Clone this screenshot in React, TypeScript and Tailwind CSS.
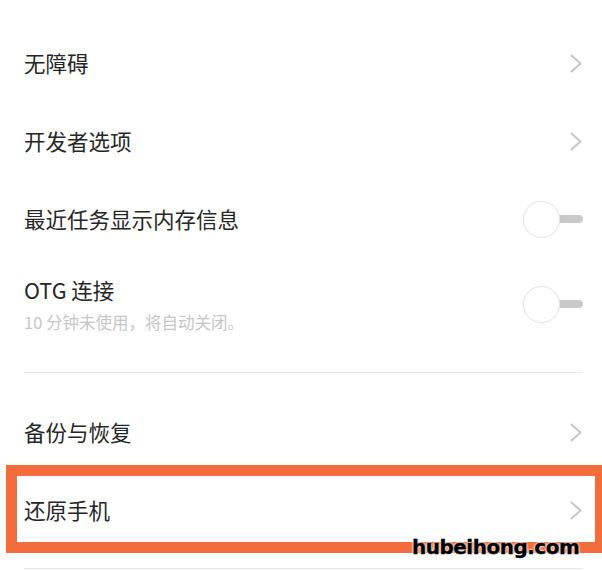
import React from "react";

const FONT = "font-['Noto_Sans_CJK_SC','Noto_Sans',sans-serif]";

function Chevron() {
  return (
    <svg width="14" height="21" viewBox="0 0 14 21" fill="none" aria-hidden>
      <path d="M2.5 2.5L11.5 10.5L2.5 18.5" stroke="#c6c6c6" strokeWidth="2" strokeLinecap="round" strokeLinejoin="round" />
    </svg>
  );
}

function Toggle() {
  return (
    <div className="relative w-[60px] h-[38px] flex items-center">
      <div className="absolute right-0 top-1/2 -translate-y-1/2 w-[42px] h-[8px] rounded-full bg-[#c9c9c9]" />
      <div className="relative w-[37px] h-[37px] rounded-full bg-white border border-[#e4e4e4] shadow-[0_0_2px_rgba(0,0,0,0.06)]" />
    </div>
  );
}

function Row({ title, right, h = "h-[78px]" }: { title: string; right: React.ReactNode; h?: string }) {
  return (
    <div className={`flex items-center justify-between pl-6 pr-[19px] ${h}`}>
      <span className="text-[21.5px] leading-[26px] text-[#262626]">{title}</span>
      {right}
    </div>
  );
}

export default function App() {
  return (
    <div className={`relative w-[602px] h-[570px] overflow-hidden bg-white ${FONT}`}>
      <div className="flex flex-col pt-[24px]">
        <Row title="无障碍" right={<Chevron />} />
        <Row title="开发者选项" right={<Chevron />} />
        <Row title="最近任务显示内存信息" right={<Toggle />} />

        <div className="flex items-center justify-between pl-6 pr-[19px] h-[92px]">
          <div className="flex flex-col gap-[10px]">
            <span className="text-[21.5px] leading-[26px] text-[#262626]">OTG 连接</span>
            <span className="text-[16.5px] leading-[18px] text-[#c6c6c6]">10 分钟未使用，将自动关闭。</span>
          </div>
          <Toggle />
        </div>

        <div className="mt-[22px] ml-6 mr-[19px] h-px bg-[#e6e6e6]" />

        <div className="mt-[20px]">
          <Row title="备份与恢复" right={<Chevron />} />
          <div className="relative">
            <Row title="还原手机" right={<Chevron />} />
            {/* highlight annotation */}
            <div className="absolute left-[6px] -top-[6px] w-[600px] h-[88px] border-[11px] border-[#f36c3c]" />
          </div>
        </div>

        <div className="mt-[19px] ml-6 mr-[19px] h-px bg-[#e6e6e6]" />
      </div>

      {/* watermark */}
      <div className="absolute left-[412px] top-[534px] font-['DejaVu_Sans',sans-serif] font-bold text-[20px] leading-[26px] tracking-[-0.5px] text-black [-webkit-text-stroke:0.4px_black] [text-shadow:0_0_2px_white,0_0_2px_white,0_0_3px_white]">
        hubeihong.com
      </div>
    </div>
  );
}
